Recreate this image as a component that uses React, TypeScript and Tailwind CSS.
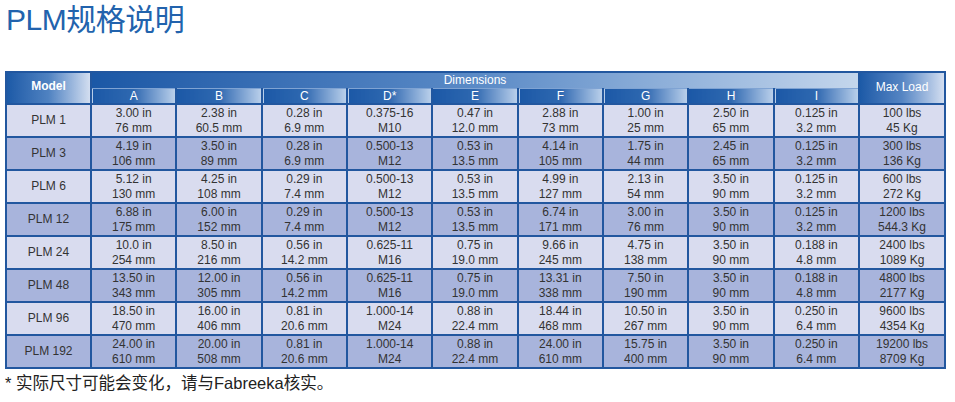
import React from 'react';

const rows = [
  { model: 'PLM 1', cells: [['3.00 in', '76 mm'], ['2.38 in', '60.5 mm'], ['0.28 in', '6.9 mm'], ['0.375-16', 'M10'], ['0.47 in', '12.0 mm'], ['2.88 in', '73 mm'], ['1.00 in', '25 mm'], ['2.50 in', '65 mm'], ['0.125 in', '3.2 mm']], load: ['100 lbs', '45 Kg'] },
  { model: 'PLM 3', cells: [['4.19 in', '106 mm'], ['3.50 in', '89 mm'], ['0.28 in', '6.9 mm'], ['0.500-13', 'M12'], ['0.53 in', '13.5 mm'], ['4.14 in', '105 mm'], ['1.75 in', '44 mm'], ['2.45 in', '65 mm'], ['0.125 in', '3.2 mm']], load: ['300 lbs', '136 Kg'] },
  { model: 'PLM 6', cells: [['5.12 in', '130 mm'], ['4.25 in', '108 mm'], ['0.29 in', '7.4 mm'], ['0.500-13', 'M12'], ['0.53 in', '13.5 mm'], ['4.99 in', '127 mm'], ['2.13 in', '54 mm'], ['3.50 in', '90 mm'], ['0.125 in', '3.2 mm']], load: ['600 lbs', '272 Kg'] },
  { model: 'PLM 12', cells: [['6.88 in', '175 mm'], ['6.00 in', '152 mm'], ['0.29 in', '7.4 mm'], ['0.500-13', 'M12'], ['0.53 in', '13.5 mm'], ['6.74 in', '171 mm'], ['3.00 in', '76 mm'], ['3.50 in', '90 mm'], ['0.125 in', '3.2 mm']], load: ['1200 lbs', '544.3 Kg'] },
  { model: 'PLM 24', cells: [['10.0 in', '254 mm'], ['8.50 in', '216 mm'], ['0.56 in', '14.2 mm'], ['0.625-11', 'M16'], ['0.75 in', '19.0 mm'], ['9.66 in', '245 mm'], ['4.75 in', '138 mm'], ['3.50 in', '90 mm'], ['0.188 in', '4.8 mm']], load: ['2400 lbs', '1089 Kg'] },
  { model: 'PLM 48', cells: [['13.50 in', '343 mm'], ['12.00 in', '305 mm'], ['0.56 in', '14.2 mm'], ['0.625-11', 'M16'], ['0.75 in', '19.0 mm'], ['13.31 in', '338 mm'], ['7.50 in', '190 mm'], ['3.50 in', '90 mm'], ['0.188 in', '4.8 mm']], load: ['4800 lbs', '2177 Kg'] },
  { model: 'PLM 96', cells: [['18.50 in', '470 mm'], ['16.00 in', '406 mm'], ['0.81 in', '20.6 mm'], ['1.000-14', 'M24'], ['0.88 in', '22.4 mm'], ['18.44 in', '468 mm'], ['10.50 in', '267 mm'], ['3.50 in', '90 mm'], ['0.250 in', '6.4 mm']], load: ['9600 lbs', '4354 Kg'] },
  { model: 'PLM 192', cells: [['24.00 in', '610 mm'], ['20.00 in', '508 mm'], ['0.81 in', '20.6 mm'], ['1.000-14', 'M24'], ['0.88 in', '22.4 mm'], ['24.00 in', '610 mm'], ['15.75 in', '400 mm'], ['3.50 in', '90 mm'], ['0.250 in', '6.4 mm']], load: ['19200 lbs', '8709 Kg'] },
];

const letters = ['A', 'B', 'C', 'D*', 'E', 'F', 'G', 'H', 'I'];

const App = () => {
  return (
    <div className="w-[955px] h-[402px] bg-white overflow-hidden font-['Liberation_Sans','Noto_Sans_CJK_SC',sans-serif]">
      <h1 className="pl-[6px] pt-[2px] h-[71px] text-[30px] leading-[36px] text-[#2263ad] tracking-[-0.5px]">
        PLM规格说明
      </h1>

      <table className="ml-[5px] w-[941px] table-fixed border-collapse border-2 border-[#22579f] text-[12px] text-[#333]">
        <thead>
          <tr className="h-[16px]">
            <th
              rowSpan={2}
              className="w-[85px] border-2 border-[#22579f] bg-gradient-to-r from-[#1c5aa7] via-[#4f82c1] to-[#d3def0] text-white font-semibold text-[12px] leading-[14px] pb-[5px]"
            >
              Model
            </th>
            <th
              colSpan={9}
              className="border-x-2 border-[#22579f] bg-gradient-to-r from-[#1b58a6] via-[#5a8ac6] to-[#c4d6ec] text-white font-normal text-[12px] leading-[14px]"
            >
              Dimensions
            </th>
            <th
              rowSpan={2}
              className="w-[86px] border-2 border-[#22579f] bg-gradient-to-r from-[#1c5aa7] via-[#5585c3] to-[#d3def0] text-white font-normal text-[12px] leading-[14px] pb-[2px]"
            >
              Max Load
            </th>
          </tr>
          <tr className="h-[16px]">
            {letters.map((l) => (
              <th
                key={l}
                className="border-x-2 border-t border-t-[#7fa3d3] border-x-[#22579f] bg-gradient-to-r from-[#1b58a6] via-[#2e68b0] to-[#b9cfea] text-white font-normal text-[12px] leading-[14px]"
              >
                {l}
              </th>
            ))}
          </tr>
        </thead>
        <tbody>
          {rows.map((r, i) => (
            <tr key={r.model} className={`h-[33px] ${i % 2 === 0 ? 'bg-[#d9dcef]' : 'bg-[#a8b4dc]'}`}>
              <td className="border-2 border-[#22579f] text-center leading-[15px]">{r.model}</td>
              {r.cells.map((c, j) => (
                <td key={j} className="border-2 border-[#22579f] text-center leading-[15px]">
                  <div>{c[0]}</div>
                  <div>{c[1]}</div>
                </td>
              ))}
              <td className="border-2 border-[#22579f] text-center leading-[15px]">
                <div>{r.load[0]}</div>
                <div>{r.load[1]}</div>
              </td>
            </tr>
          ))}
        </tbody>
      </table>

      <p className="pl-[5px] pt-[3px] text-[16.5px] leading-[22px] text-[#222]">* 实际尺寸可能会变化，请与Fabreeka核实。</p>
    </div>
  );
};

export default App;
